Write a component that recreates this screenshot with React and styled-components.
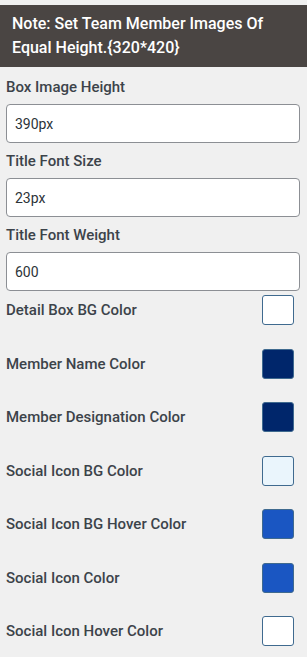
import React from "react";
import { styled, createGlobalStyle } from "styled-components";

const GlobalStyle = createGlobalStyle`
  html, body {
    margin: 0;
    padding: 0;
    background: #f0f0f0;
    font-family: Roboto, "Noto Sans", sans-serif;
  }
`;

const fields = [
  { label: "Box Image Height", value: "390px" },
  { label: "Title Font Size", value: "23px" },
  { label: "Title Font Weight", value: "600" },
];

const colors = [
  { label: "Detail Box BG Color", color: "#ffffff" },
  { label: "Member Name Color", color: "#00266b" },
  { label: "Member Designation Color", color: "#00266b" },
  { label: "Social Icon BG Color", color: "#eaf5fc" },
  { label: "Social Icon BG Hover Color", color: "#1a56c2" },
  { label: "Social Icon Color", color: "#1a56c2" },
  { label: "Social Icon Hover Color", color: "#ffffff" },
];

const App = () => {
  return (
    <Panel>
      <GlobalStyle />
      <Note>Note: Set Team Member Images Of Equal Height.{"{320*420}"}</Note>

      <Fields>
        {fields.map((f) => (
          <Field key={f.label}>
            <Label>{f.label}</Label>
            <Input defaultValue={f.value} />
          </Field>
        ))}

        <ColorList>
          {colors.map((c) => (
            <ColorRow key={c.label}>
              <Label>{c.label}</Label>
              <Swatch color={c.color} />
            </ColorRow>
          ))}
        </ColorList>
      </Fields>
    </Panel>
  );
};

export default App;

const Panel = styled.div`
  width: 307px;
  padding-top: 5px;
`;

const Note = styled.div`
  background: #4a4543;
  color: #ffffff;
  font-size: 16px;
  font-weight: 500;
  line-height: 24px;
  padding: 7px 12px;
`;

const Fields = styled.div`
  display: flex;
  flex-direction: column;
  padding: 10px 7px 0 6px;
`;

const Field = styled.div`
  display: flex;
  flex-direction: column;
  gap: 7px;

  & + & {
    margin-top: 8px;
  }
`;

const Label = styled.div`
  font-size: 15px;
  font-weight: 500;
  line-height: 20px;
  color: #3c434a;
`;

const Input = styled.input`
  box-sizing: border-box;
  height: 39px;
  width: 100%;
  padding: 0 8px;
  border: 1px solid #8c8f94;
  border-radius: 4px;
  background: #ffffff;
  font-family: Roboto, "Noto Sans", sans-serif;
  font-size: 14px;
  color: #2c3338;
  outline: none;
`;

const ColorList = styled.div`
  display: flex;
  flex-direction: column;
  gap: 23.5px;
  padding-top: 4px;
`;

const ColorRow = styled.div`
  display: flex;
  align-items: center;
  justify-content: space-between;
  height: 30px;
  padding-right: 6px;
`;

const Swatch = styled.div`
  box-sizing: border-box;
  width: 32px;
  height: 30px;
  border: 1px solid #3f6a8f;
  border-radius: 3px;
  background: ${(props) => props.color};
`;
